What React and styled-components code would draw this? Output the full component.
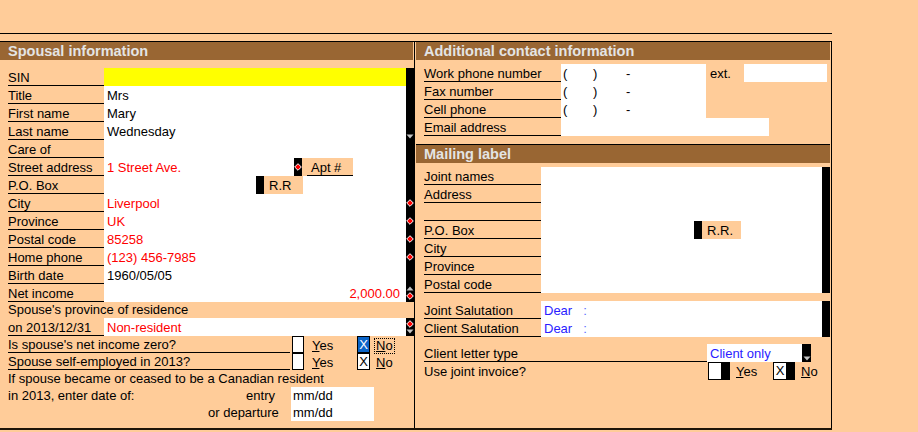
import styled, { createGlobalStyle } from 'styled-components';

const GlobalStyle = createGlobalStyle`
  body {
    margin: 0;
    background: #ffcc99;
    font-family: "Liberation Sans", Arial, sans-serif;
    font-size: 13px;
    color: #000;
  }
`;

const PEACH = '#ffcc99';

const spouseFields = [
  { label: 'SIN', value: '', bg: '#ffff00' },
  { label: 'Title', value: 'Mrs' },
  { label: 'First name', value: 'Mary' },
  { label: 'Last name', value: 'Wednesday', strip: 'down' },
  { label: 'Care of', value: '' },
  {
    label: 'Street address',
    value: '1 Street Ave.',
    red: true,
    addon: { text: 'Apt #', right: 53, width: 46, diamond: true, underline: true },
  },
  { label: 'P.O. Box', value: '', addon: { text: 'R.R', right: 103, width: 34 } },
  { label: 'City', value: 'Liverpool', red: true, strip: 'diamond' },
  { label: 'Province', value: 'UK', red: true, strip: 'diamond' },
  { label: 'Postal code', value: '85258', red: true, strip: 'diamond' },
  { label: 'Home phone', value: '(123) 456-7985', red: true, strip: 'diamond' },
  { label: 'Birth date', value: '1960/05/05' },
  { label: 'Net income', value: '2,000.00', red: true, right: true, strip: 'upDiamond' },
];

const phoneFields = ['Work phone number', 'Fax number', 'Cell phone'];

const mailFields = [
  { label: 'Joint names' },
  { label: 'Address' },
  { label: '' },
  { label: 'P.O. Box', addon: { text: 'R.R.', right: 81, width: 34 } },
  { label: 'City' },
  { label: 'Province' },
  { label: 'Postal code' },
];

const Diamond = () => (
  <svg width="8" height="8" viewBox="0 0 8 8">
    <path d="M4 .7 7.3 4 4 7.3 .7 4Z" fill="#ff0000" stroke="#ffffff" strokeWidth="1" />
  </svg>
);

const Arrow = ({ up }) => (
  <svg width="8" height="5" viewBox="0 0 8 5">
    <path d={up ? 'M4 .5 7.5 4.5H.5Z' : 'M.5 .5H7.5L4 4.5Z'} fill="#c4c4c4" />
  </svg>
);

const StripIcons = ({ kind }) => {
  if (kind === 'diamond') return <Diamond />;
  if (kind === 'down') return <Arrow />;
  if (kind === 'upDiamond')
    return (
      <>
        <Arrow up />
        <Diamond />
      </>
    );
  if (kind === 'diamondDown')
    return (
      <>
        <Diamond />
        <Arrow />
      </>
    );
  return null;
};

const Addon = ({ text, right, width, diamond, underline }) => (
  <AddonWrap $right={right}>
    <AddonBtn>{diamond && <Diamond />}</AddonBtn>
    <AddonTag $w={width}>
      <TagText $underline={underline}>{text}</TagText>
    </AddonTag>
  </AddonWrap>
);

const App = () => {
  return (
    <>
      <GlobalStyle />
      <Page>
        <TopRule />
        <Panels>
          <LeftPanel>
            <Header>Spousal information</Header>
            <FieldList>
              {spouseFields.map((f) => (
                <FieldRow key={f.label}>
                  <Label>{f.label}</Label>
                  <Value $bg={f.bg} $red={f.red} $right={f.right}>
                    {f.value}
                    {f.addon && <Addon {...f.addon} />}
                  </Value>
                  <Strip $end={f.strip === 'down'}>
                    <StripIcons kind={f.strip} />
                  </Strip>
                </FieldRow>
              ))}
              <PlainRow $h={16}>Spouse's province of residence</PlainRow>
              <FieldRow>
                <Label>on 2013/12/31</Label>
                <Value $red>Non-resident</Value>
                <Strip>
                  <StripIcons kind="diamondDown" />
                </Strip>
              </FieldRow>
            </FieldList>
            <CheckRow $pad={8} $h={17}>
              <Question $w={282} $rule>Is spouse's net income zero?</Question>
              <Tick $w={12} $gap={2} />
              <Option $w={44} $gap={7}>
                <u>Y</u>es
              </Option>
              <Tick $w={13} $checked>X</Tick>
              <Option $gap={5} $focus>
                <u>N</u>o
              </Option>
            </CheckRow>
            <CheckRow $pad={8} $h={17}>
              <Question $w={282} $rule>Spouse self-employed in 2013?</Question>
              <Tick $w={12} $gap={2} />
              <Option $w={44} $gap={7}>
                <u>Y</u>es
              </Option>
              <Tick $w={13}>X</Tick>
              <Option $gap={5}>
                <u>N</u>o
              </Option>
            </CheckRow>
            <PlainRow $h={17}>If spouse became or ceased to be a Canadian resident</PlainRow>
            <DateRow>
              <span>in 2013, enter date of:</span>
              <DateLabel>entry</DateLabel>
              <DateInput>mm/dd</DateInput>
            </DateRow>
            <DateRow>
              <span />
              <DateLabel>or departure</DateLabel>
              <DateInput>mm/dd</DateInput>
            </DateRow>
          </LeftPanel>

          <RightPanel>
            <Header $inset>Additional contact information</Header>
            <Block $top={4}>
              {phoneFields.map((label, i) => (
                <ContactRow key={label}>
                  <Label>{label}</Label>
                  <Phone>
                    <span>(</span>
                    <span>)</span>
                    <span>-</span>
                  </Phone>
                  {i === 0 && (
                    <>
                      <Ext>ext.</Ext>
                      <WhiteBox />
                    </>
                  )}
                </ContactRow>
              ))}
              <ContactRow $email>
                <Label>Email address</Label>
                <WhiteBox />
              </ContactRow>
            </Block>

            <Header $inset $ruled>
              Mailing label
            </Header>
            <Block $top={4}>
              {mailFields.map((f, i) => (
                <MailRow key={i}>
                  <Label>{f.label}</Label>
                  <Value>{f.addon && <Addon {...f.addon} />}</Value>
                  <Strip />
                </MailRow>
              ))}
            </Block>
            <Block $top={8}>
              {['Joint Salutation', 'Client Salutation'].map((label) => (
                <MailRow key={label}>
                  <Label>{label}</Label>
                  <Value $blue>
                    Dear<Colon>:</Colon>
                  </Value>
                  <Strip />
                </MailRow>
              ))}
            </Block>
            <Block $top={7}>
              <LetterRow>
                <Label>Client letter type</Label>
                <Value $blue>Client only</Value>
                <Strip $end>
                  <Arrow />
                </Strip>
              </LetterRow>
              <CheckRow $pad={9} $h={18}>
                <Question $w={284}>Use joint invoice?</Question>
                <Tick $w={22} $btn />
                <Option $w={36} $gap={5}>
                  <u>Y</u>es
                </Option>
                <Tick $w={22} $btn>
                  X
                </Tick>
                <Option $gap={5}>
                  <u>N</u>o
                </Option>
              </CheckRow>
            </Block>
          </RightPanel>
        </Panels>
      </Page>
    </>
  );
};

const Page = styled.div`
  width: 832px;
`;

const TopRule = styled.div`
  height: 33px;
  border-bottom: 1px solid #000;
`;

const Panels = styled.div`
  display: flex;
  margin-top: 7px;
  height: 386px;
  border-top: 1px solid #000;
  border-bottom: 2px solid #1e1408;
`;

const LeftPanel = styled.section`
  width: 414px;
  display: flex;
  flex-direction: column;
`;

const RightPanel = styled.section`
  width: 416px;
  display: flex;
  flex-direction: column;
  border-left: 1px solid #000;
  border-right: 1px solid #000;
`;

const Header = styled.h2`
  margin: 0 1px 0 ${(p) => (p.$inset ? '1px' : '0')};
  height: 18px;
  padding-left: 8px;
  background: #996633;
  color: #e4e4e4;
  font-size: 14.5px;
  font-weight: bold;
  line-height: 18px;
  border-top: ${(p) => (p.$ruled ? '1px solid #000' : 'none')};
  margin-top: ${(p) => (p.$ruled ? '8px' : '0')};
`;

const FieldList = styled.div`
  margin-top: 8px;
  display: flex;
  flex-direction: column;
`;

const Block = styled.div`
  margin-top: ${(p) => p.$top}px;
  display: flex;
  flex-direction: column;
`;

const FieldRow = styled.div`
  display: grid;
  grid-template-columns: 96px 302px 8px;
  grid-template-rows: 18px;
  height: 18px;
  padding-left: 8px;
`;

const MailRow = styled.div`
  display: grid;
  grid-template-columns: 117px 281px 8px;
  grid-template-rows: 18px;
  height: 18px;
  padding-left: 9px;
`;

const LetterRow = styled.div`
  display: grid;
  grid-template-columns: 283px 95px 9px;
  grid-template-rows: 18px;
  height: 18px;
  padding-left: 9px;
`;

const ContactRow = styled.div`
  display: grid;
  grid-template-columns: ${(p) => (p.$email ? '137px 208px' : '137px 145px 38px 83px')};
  grid-template-rows: 18px;
  height: 18px;
  padding-left: 9px;
`;

const Label = styled.div`
  box-sizing: border-box;
  border-bottom: 1px solid #000;
  line-height: 17px;
  padding-top: 1px;
  white-space: nowrap;
`;

const Value = styled.div`
  display: flex;
  align-items: center;
  justify-content: ${(p) => (p.$right ? 'flex-end' : 'flex-start')};
  padding: 0 ${(p) => (p.$right ? '6px' : '0')} 0 3px;
  background: ${(p) => p.$bg || '#fff'};
  color: ${(p) => (p.$red ? '#ff0000' : p.$blue ? '#2a1cff' : '#000')};
  white-space: nowrap;
`;

const Colon = styled.span`
  margin-left: 11px;
  color: #5a6cff;
`;

const Strip = styled.div`
  background: #000;
  display: flex;
  flex-direction: column;
  align-items: center;
  justify-content: ${(p) => (p.$end ? 'flex-end' : 'center')};
  gap: 1px;
  padding-bottom: ${(p) => (p.$end ? '1px' : '0')};
`;

const AddonWrap = styled.div`
  display: flex;
  align-self: stretch;
  margin: 0 ${(p) => p.$right}px 0 auto;
`;

const AddonBtn = styled.div`
  width: 8px;
  background: #000;
  display: flex;
  align-items: center;
  justify-content: center;
`;

const AddonTag = styled.div`
  width: ${(p) => p.$w}px;
  background: ${PEACH};
  color: #000;
  padding-left: 5px;
`;

const TagText = styled.div`
  box-sizing: border-box;
  height: 100%;
  line-height: 17px;
  padding-top: 1px;
  padding-left: ${(p) => (p.$underline ? '4px' : '0')};
  border-bottom: ${(p) => (p.$underline ? '1px solid #000' : 'none')};
`;

const PlainRow = styled.div`
  height: ${(p) => p.$h}px;
  line-height: ${(p) => p.$h}px;
  padding-left: 8px;
  white-space: nowrap;
`;

const CheckRow = styled.div`
  display: flex;
  height: ${(p) => p.$h}px;
  padding-left: ${(p) => p.$pad}px;
  align-items: stretch;
`;

const Question = styled.div`
  box-sizing: border-box;
  width: ${(p) => p.$w}px;
  flex-shrink: 0;
  line-height: ${(p) => (p.$rule ? '16px' : '18px')};
  padding-top: ${(p) => (p.$rule ? '1px' : '1px')};
  border-bottom: ${(p) => (p.$rule ? '1px solid #000' : 'none')};
  white-space: nowrap;
`;

const Tick = styled.div`
  box-sizing: border-box;
  width: ${(p) => p.$w}px;
  margin-left: ${(p) => p.$gap || 0}px;
  flex-shrink: 0;
  border: 1px solid #000;
  border-right-width: ${(p) => (p.$btn ? '9px' : '1px')};
  background: ${(p) => (p.$checked ? '#0a64c8' : '#fff')};
  color: ${(p) => (p.$checked ? '#fff' : '#000')};
  font-size: 13px;
  line-height: 16px;
  text-align: center;
`;

const Option = styled.div`
  width: ${(p) => (p.$w ? `${p.$w}px` : 'auto')};
  margin-left: ${(p) => p.$gap}px;
  flex-shrink: 0;
  align-self: center;
  line-height: 14px;
  padding: 0 1px;
  margin-top: 2px;
  outline: ${(p) => (p.$focus ? '1px dotted #000' : 'none')};
  u {
    text-decoration: underline;
    text-underline-offset: 1px;
  }
`;

const DateRow = styled.div`
  display: grid;
  grid-template-columns: 200px 83px 83px;
  height: 17px;
  line-height: 17px;
  padding-left: 8px;
  white-space: nowrap;
`;

const DateLabel = styled.div`
  text-align: right;
  padding-right: 16px;
`;

const DateInput = styled.div`
  background: #fff;
  padding-left: 2px;
`;

const Phone = styled.div`
  display: grid;
  grid-template-columns: 30px 33px 1fr;
  padding-left: 2px;
  background: #fff;
  line-height: 19px;
`;

const Ext = styled.div`
  padding-left: 4px;
  line-height: 19px;
`;

const WhiteBox = styled.div`
  background: #fff;
`;

export default App;
